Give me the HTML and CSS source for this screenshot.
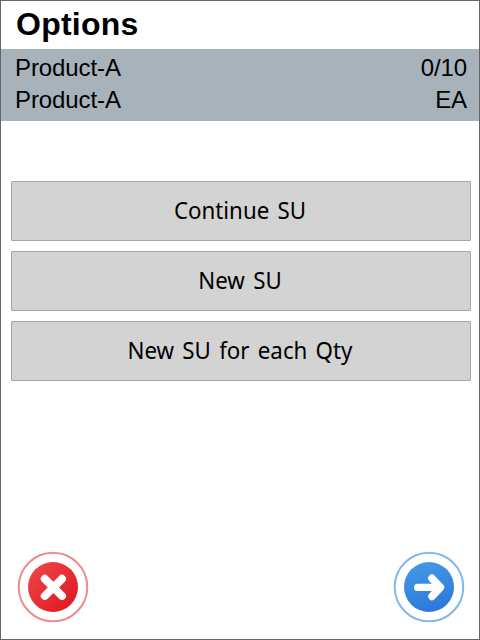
FILE: index.html
```html
<!DOCTYPE html>
<html lang="en">
<head>
<meta charset="utf-8">
<title>Options</title>
<link rel="stylesheet" href="styles.css">
</head>
<body>
<main class="screen">
  <h1 class="title">Options</h1>
  <section class="info">
    <div class="info-row"><span>Product-A</span><span>0/10</span></div>
    <div class="info-row"><span>Product-A</span><span>EA</span></div>
  </section>
  <div class="options">
    <button class="option"><span class="label">Continue SU</span></button>
    <button class="option"><span class="label">New SU</span></button>
    <button class="option"><span class="label">New SU for each Qty</span></button>
  </div>
  <footer class="actions">
    <button class="round" aria-label="Cancel">
      <svg width="72" height="72" viewBox="0 0 72 72">
        <defs><linearGradient id="red" x1="0" y1="0" x2="1" y2="1"><stop offset="0" stop-color="#ee484d"/><stop offset="1" stop-color="#df151c"/></linearGradient></defs>
        <circle cx="36" cy="36" r="34.3" fill="#fff" stroke="#ee8b8f" stroke-width="2"/>
        <circle cx="36" cy="36" r="25" fill="url(#red)"/>
        <path d="M27.8 27.8 45 45M45 27.8 27.8 45" stroke="#fff" stroke-width="8" stroke-linecap="round"/>
      </svg>
    </button>
    <button class="round" aria-label="Next">
      <svg width="72" height="72" viewBox="0 0 72 72">
        <defs><linearGradient id="blue" x1=".35" y1="0" x2=".65" y2="1"><stop offset="0" stop-color="#4299e3"/><stop offset="1" stop-color="#2c77dc"/></linearGradient></defs>
        <circle cx="36" cy="36" r="34.3" fill="#fff" stroke="#80b9ef" stroke-width="2"/>
        <circle cx="36" cy="36" r="25" fill="url(#blue)"/>
        <path d="M24.7 36.4H46" fill="none" stroke="#fff" stroke-width="7.4" stroke-linecap="round"/>
        <path d="M39 27.4 47.4 36.4 39 45.4" fill="none" stroke="#fff" stroke-width="7.6" stroke-linecap="round" stroke-linejoin="round"/>
      </svg>
    </button>
  </footer>
</main>
</body>
</html>
```
FILE: styles.css
```css
* {
  box-sizing: border-box;
}

body {
  margin: 0;
  background: #fff;
  color: #000;
  font-family: "Liberation Sans", Arial, sans-serif;
}

.screen {
  display: flex;
  flex-direction: column;
  width: 480px;
  height: 640px;
  border: 1px solid #696567;
}

.title {
  height: 48px;
  margin: 0;
  padding-left: 15px;
  font-size: 32px;
  line-height: 46px;
  letter-spacing: 0.25px;
}

.info {
  height: 72px;
  padding: 3px 12px 5px 14px;
  background: #a8b2ba;
  font-size: 24px;
  line-height: 32px;
  letter-spacing: -0.1px;
}

.info-row {
  display: flex;
  justify-content: space-between;
}

.options {
  display: flex;
  flex-direction: column;
  gap: 10px;
  padding: 60px 8px 0 10px;
}

.option {
  height: 60px;
  padding: 0 2px 2px 0;
  border: 1px solid #a5a5a5;
  border-radius: 1px;
  background: #d3d3d3;
  color: #000;
  font: 24px/32px "Noto Sans", sans-serif;
}

.label {
  display: block;
  word-spacing: 2.6px;
  transform: scaleX(0.93);
}

.actions {
  display: flex;
  justify-content: space-between;
  margin-top: auto;
  padding: 0 14px 16px 16px;
}

.round {
  width: 72px;
  height: 72px;
  padding: 0;
  border: 0;
  background: none;
}

.round svg {
  display: block;
}
```
